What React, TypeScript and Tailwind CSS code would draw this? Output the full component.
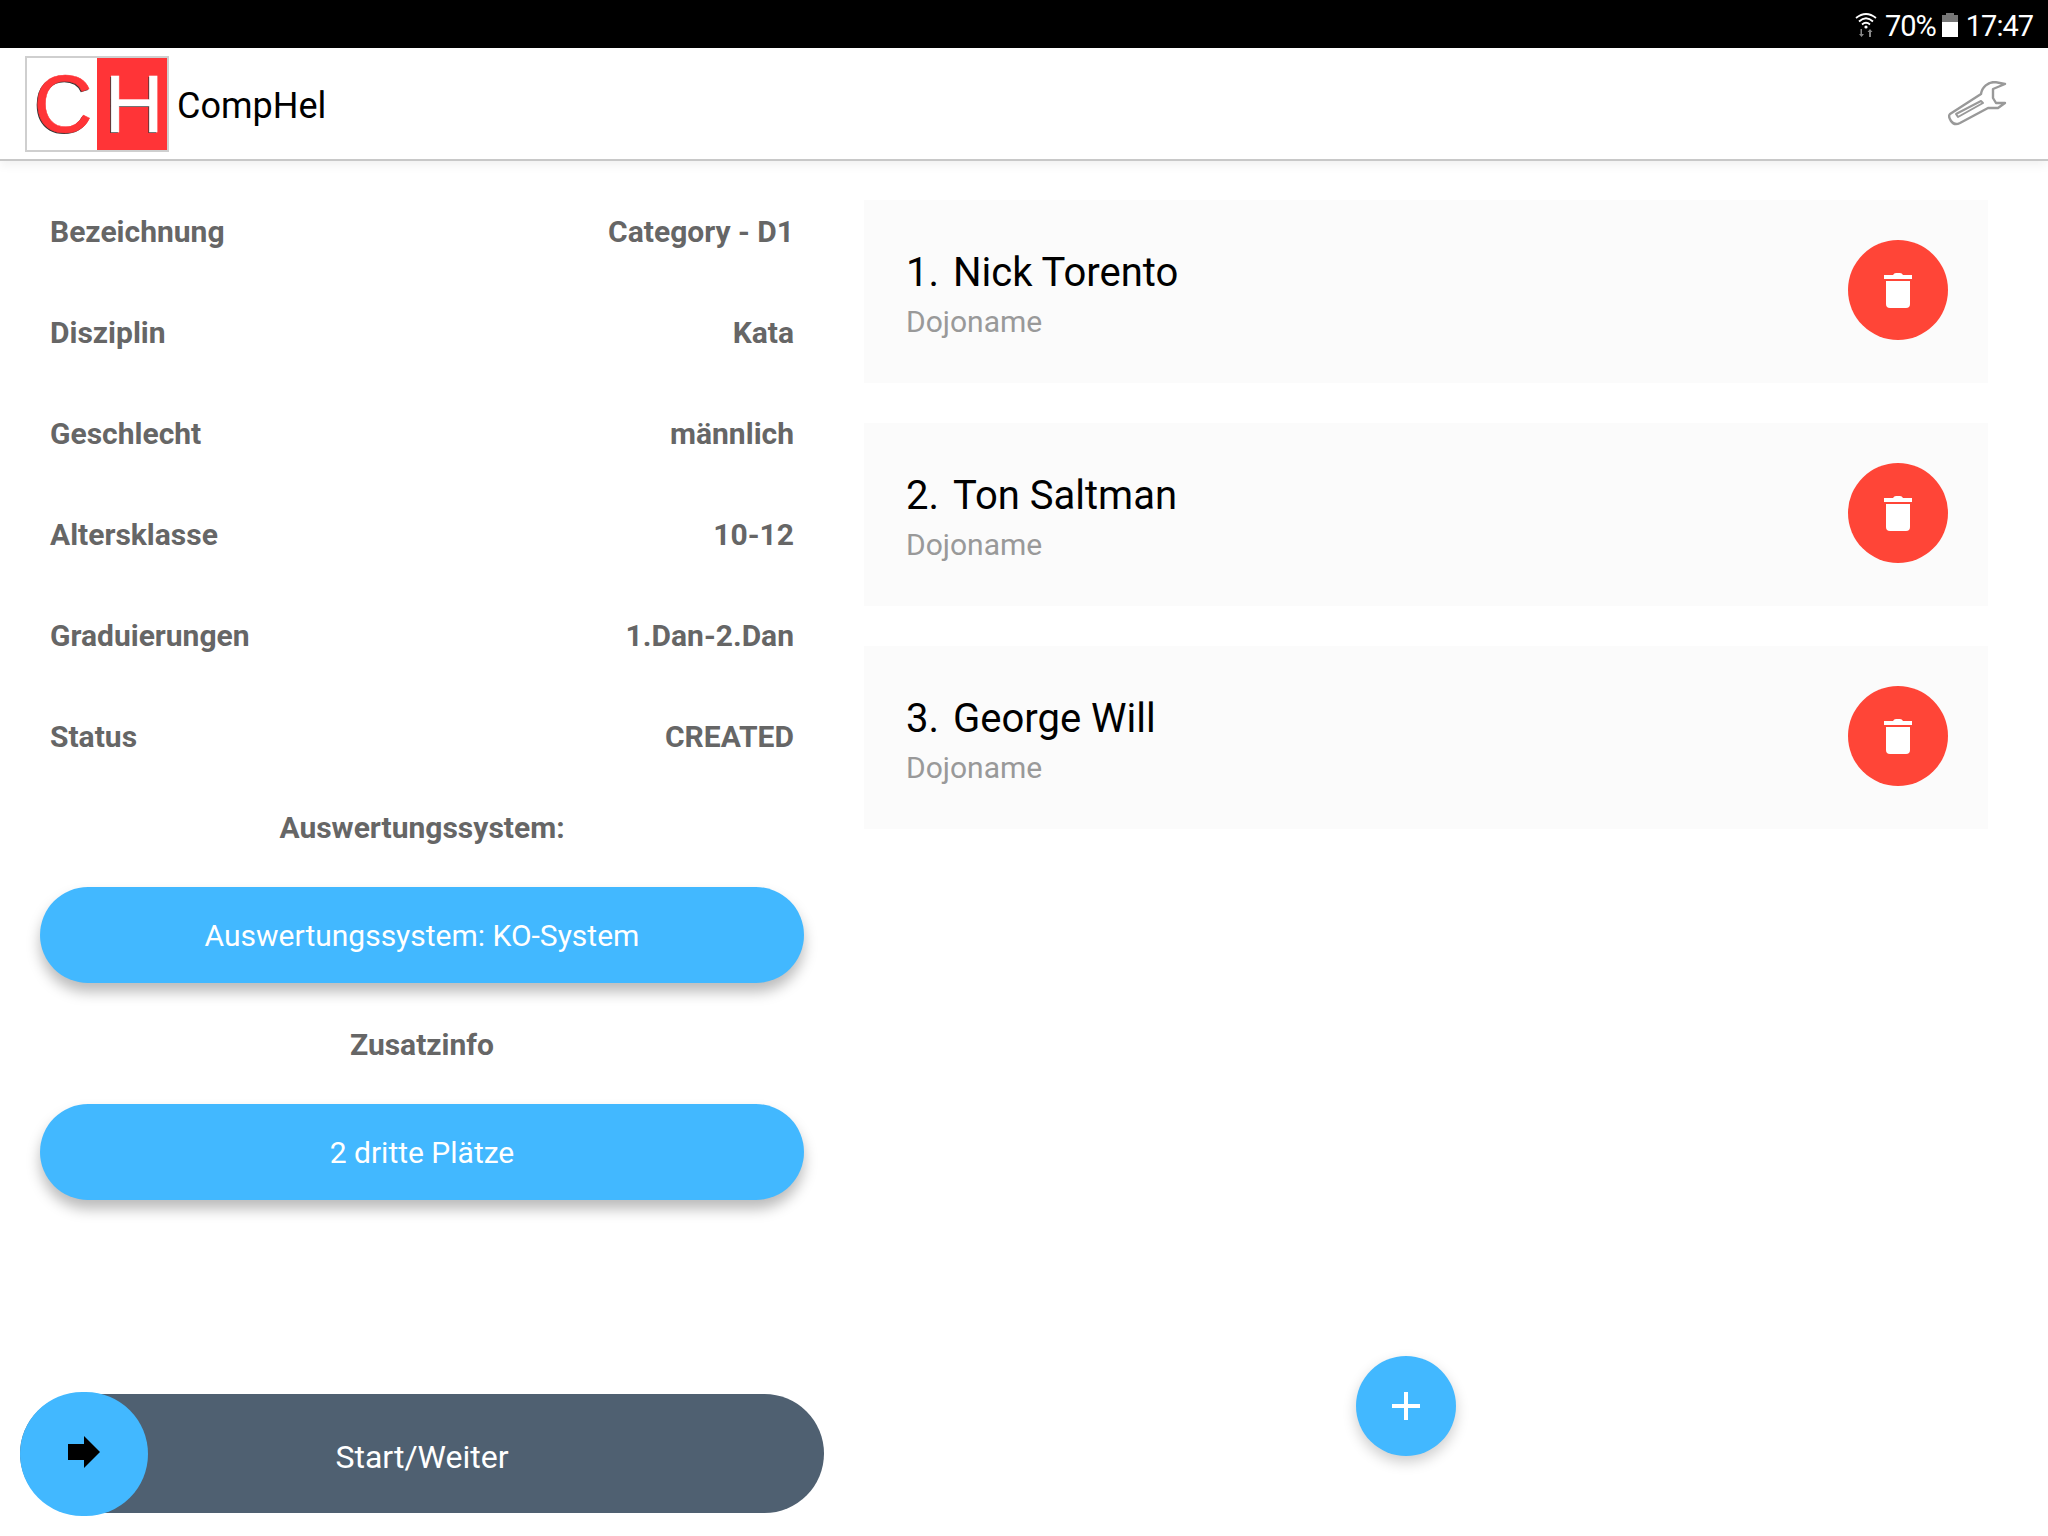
const rows: [string, string][] = [
  ["Bezeichnung", "Category - D1"],
  ["Disziplin", "Kata"],
  ["Geschlecht", "männlich"],
  ["Altersklasse", "10-12"],
  ["Graduierungen", "1.Dan-2.Dan"],
  ["Status", "CREATED"],
];
const people = ["Nick Torento", "Ton Saltman", "George Will"];

function Trash() {
  return (
    <svg width="28" height="36" viewBox="0 0 28 36" fill="#fff">
      <path d="M9 3 Q10 1 12 1 H16 Q18 1 19 3 H28 V7 H0 V3 Z" />
      <path d="M2 9 H26 V32 Q26 36 22 36 H6 Q2 36 2 32 Z" />
    </svg>
  );
}

function Wrench() {
  return (
    <svg width="60" height="46" viewBox="0 0 60 46" fill="none" stroke="#999" strokeWidth="2.4" strokeLinejoin="round">
      <path d="M2 33 L33 13 C34 6 40 1 47 1 L57 3 L45 8 L45 17 L48 22 L57 22 L50 27 L40 27 L12 42 C8 44 5 43 3 40 C1 37 0 35 2 33 Z" />
      <path d="M8 33 L33 20 L35 22 L10 36 Z" strokeWidth="2" />
    </svg>
  );
}

function Wifi() {
  return (
    <svg width="22" height="24" viewBox="0 0 22 24">
      <path d="M1 5 Q11 -3 21 5" fill="none" stroke="#fff" strokeWidth="1.8" />
      <path d="M4 8.5 Q11 2 18 8.5" fill="none" stroke="#fff" strokeWidth="1.8" />
      <path d="M7 11.5 Q11 8 15 11.5" fill="none" stroke="#fff" strokeWidth="1.8" />
      <circle cx="11" cy="14" r="1.6" fill="#fff" />
      <path d="M6 24 V19 H4 L6.5 16 L9 19 H7.5 V24 Z" fill="#888" transform="rotate(180 6.5 20)" />
      <path d="M14 24 V19 H12.5 L15 16 L17.5 19 H16 V24 Z" fill="#888" />
    </svg>
  );
}

function Battery() {
  return (
    <div className="flex flex-col items-center w-4 h-[24px]">
      <div className="w-2 h-[2px] bg-[#777]" />
      <div className="w-4 h-[7px] bg-[#777]" />
      <div className="w-4 flex-1 bg-white" />
    </div>
  );
}

function Pill({ children }: { children: string }) {
  return (
    <div className="h-24 shrink-0 rounded-[48px] bg-[#42b8ff] flex items-center justify-center text-white text-[30px] shadow-[0_9px_14px_rgba(0,0,0,0.27)]">
      {children}
    </div>
  );
}

export default function App() {
  return (
    <div className="w-[2048px] h-[1536px] bg-white flex flex-col overflow-hidden font-['Roboto',sans-serif]">
      <div className="h-12 bg-black flex items-center justify-end pr-[15px] text-white text-[29px] tracking-[-1px] shrink-0">
        <span className="mr-2 flex pt-[1px]"><Wifi /></span>
        <span className="pt-[5px] leading-[43px]">70%</span>
        <span className="ml-[6px] mr-2 flex pt-[1px]"><Battery /></span>
        <span className="pt-[5px] leading-[43px]">17:47</span>
      </div>
      <header className="h-[113px] shrink-0 flex items-center justify-between pl-[25px] pr-10 border-b-2 border-[#c8c8c8] shadow-[0_4px_10px_rgba(0,0,0,0.06)]">
        <div className="flex items-center gap-2">
          <div className="w-[144px] h-[96px] border-2 border-[#cfcfcf] flex font-['Liberation_Sans',sans-serif] text-[82px] leading-none">
            <div className="w-[70px] pl-[2px] flex items-center justify-center text-[#ff3437] [-webkit-text-stroke:0.5px_#ff3437] [text-shadow:-1px_1px_0_#333]">C</div>
            <div className="flex-1 pl-1 bg-[#ff3437] flex items-center justify-center text-white [-webkit-text-stroke:0.5px_#fff] [text-shadow:-1px_1px_0_#333]">H</div>
          </div>
          <span className="text-[36px] text-black mt-[4px]">CompHel</span>
        </div>
        <Wrench />
      </header>
      <div className="flex-1 flex min-h-0">
        <aside className="w-[864px] shrink-0 relative pt-5 pl-10 pr-[60px] flex flex-col">
          {rows.map(([k, v]) => (
            <div key={k} className="h-[101px] shrink-0 flex items-center justify-between px-[10px] text-[30px] font-bold text-[#666]">
              <span>{k}</span>
              <span>{v}</span>
            </div>
          ))}
          <div className="text-center text-[30px] font-bold text-[#666] mt-[23px] mb-[42px] leading-[35px]">Auswertungssystem:</div>
          <Pill>Auswertungssystem: KO-System</Pill>
          <div className="text-center text-[30px] font-bold text-[#666] mt-11 mb-[42px] leading-[35px]">Zusatzinfo</div>
          <Pill>2 dritte Plätze</Pill>
          <div className="absolute left-5 top-[1231px] w-[804px] h-[124px] flex items-center">
            <div className="w-full h-[119px] mb-[1px] rounded-[60px] bg-[#4f6071] flex items-center justify-center text-white text-[32px] pt-[6px]">
              Start/Weiter
            </div>
            <div className="absolute left-0 top-0 w-[128px] h-[124px] rounded-full bg-[#42b8ff] flex items-center justify-center">
              <svg className="mb-1" width="32" height="32" viewBox="0 0 32 32" fill="#000"><path d="M0 8 H16 V0 L32 16 L16 32 V24 H0 Z" /></svg>
            </div>
          </div>
        </aside>
        <main className="flex-1 relative pt-[39px] pr-[60px] flex flex-col gap-10">
          {people.map((p, i) => (
            <div key={p} className="h-[183px] shrink-0 bg-[#fbfbfb] flex items-center justify-between pl-[42px] pr-10">
              <div className="flex flex-col pt-1">
                <div className="text-[40px] leading-[47px] text-black flex">
                  <span className="w-[47px]">{i + 1}.</span>
                  <span>{p}</span>
                </div>
                <div className="text-[30px] leading-[35px] mt-2 text-[#999]">Dojoname</div>
              </div>
              <button className="w-[100px] h-[100px] mb-[3px] rounded-full bg-[#ff4537] flex items-center justify-center">
                <Trash />
              </button>
            </div>
          ))}
          <button className="absolute left-[492px] top-[1195px] w-[100px] h-[100px] rounded-full bg-[#42b8ff] flex items-center justify-center shadow-[0_6px_14px_rgba(0,0,0,0.2)]">
            <svg width="28" height="28" viewBox="0 0 28 28" fill="#fff"><path d="M12 0 H16 V12 H28 V16 H16 V28 H12 V16 H0 V12 H12 Z" /></svg>
          </button>
        </main>
      </div>
    </div>
  );
}
